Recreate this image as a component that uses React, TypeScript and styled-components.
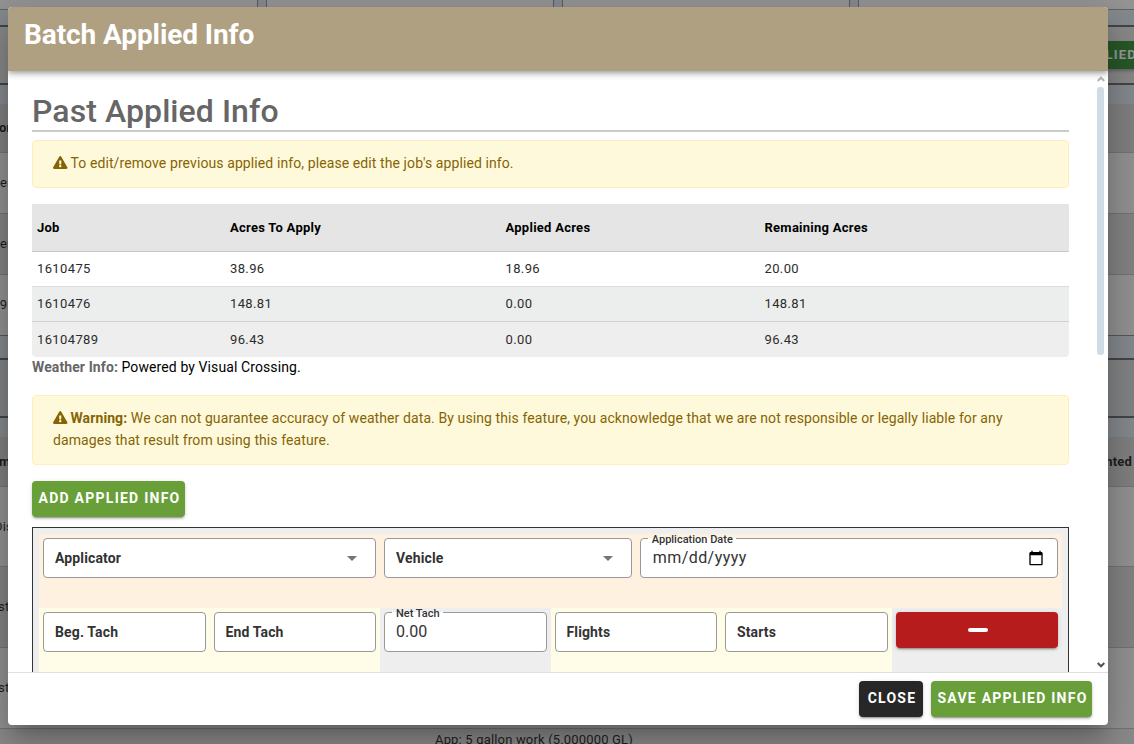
import React from "react";
import styled, { createGlobalStyle } from "styled-components";

const GlobalStyle = createGlobalStyle`
  *, *::before, *::after { box-sizing: border-box; }
  html, body { margin: 0; padding: 0; height: 100%; overflow: hidden; }
  body { font-family: Roboto, "Liberation Sans", sans-serif; font-size: 14px; color: #000; }
`;

const Screen = styled.div`
  position: relative;
  width: 1134px;
  height: 744px;
  overflow: hidden;
  background: #fff;
`;

/* ---- page behind the dialog ---- */

const Page = styled.div`
  display: flex;
  flex-direction: column;
  height: 744px;
`;

const TileRow = styled.div`
  display: grid;
  flex: none;
  grid-template-columns: 258px 288px 288px 1fr;
  column-gap: 8px;
  height: 10px;
  background: #dbe7f0;
  border-bottom: 1px solid #999;
`;

const Tile = styled.div<{ $first?: boolean; $last?: boolean }>`
  background: #f8f8f8;
  border-left: ${(p) => (p.$first ? "0" : "1px solid #8c8c8c")};
  border-right: ${(p) => (p.$last ? "0" : "1px solid #8c8c8c")};
`;

const Band = styled.div<{ $h: number; $bg: string; $line?: string; $lineWidth?: number; $bold?: boolean }>`
  display: flex;
  justify-content: space-between;
  align-items: center;
  flex: none;
  height: ${(p) => p.$h}px;
  background: ${(p) => p.$bg};
  border-bottom: ${(p) => (p.$line ? `${p.$lineWidth ?? 1}px solid ${p.$line}` : "0")};
  font-size: 13px;
  font-weight: ${(p) => (p.$bold ? 700 : 400)};
  letter-spacing: 0.2px;
  color: #1c1c1c;
  overflow: hidden;
  white-space: nowrap;
`;

const CutLeft = styled.span<{ $shift?: number }>`
  margin-left: ${(p) => p.$shift ?? 0}px;
  padding-bottom: 1px;
`;

const CutRight = styled.span`
  padding-right: 2px;
`;

const PageButton = styled.span`
  display: flex;
  align-items: center;
  justify-content: flex-end;
  width: 120px;
  height: 28px;
  margin-right: -3px;
  padding-bottom: 1px;
  background: #2f8a2f;
  color: #fff;
  font-weight: 700;
  letter-spacing: 1.2px;
  box-shadow: 0 2px 3px rgba(0, 0, 0, 0.3);
`;

const JobNote = styled.div`
  display: flex;
  flex: 1;
  padding: 3px 0 0 435px;
  background: #e8e8e8;
  font-size: 13px;
  letter-spacing: 0.17px;
  white-space: nowrap;
  color: #222;
`;

const Overlay = styled.div`
  position: absolute;
  inset: 0;
  background: rgba(33, 33, 33, 0.46);
`;

/* ---- dialog ---- */

const Dialog = styled.section`
  position: absolute;
  left: 8px;
  top: 7px;
  width: 1100px;
  height: 718px;
  display: flex;
  flex-direction: column;
  border-radius: 4px;
  overflow: hidden;
  background: #fff;
  box-shadow: 0 11px 15px -7px rgba(0, 0, 0, 0.2), 0 24px 38px 3px rgba(0, 0, 0, 0.14),
    0 9px 46px 8px rgba(0, 0, 0, 0.12);
`;

const DialogHeader = styled.header`
  position: relative;
  flex: none;
  height: 64px;
  padding: 11px 16px;
  background: #afa082;
  color: #fff;
  font-size: 28px;
  line-height: 33px;
  font-weight: 700;
  letter-spacing: -0.09px;
  box-shadow: 0 2px 4px -1px rgba(0, 0, 0, 0.2), 0 4px 5px 0 rgba(0, 0, 0, 0.14),
    0 1px 10px 0 rgba(0, 0, 0, 0.12);
  z-index: 1;
`;

const DialogBody = styled.div`
  display: flex;
  height: 601px;
  flex: none;
  overflow: hidden;
`;

const Content = styled.main`
  width: 1085px;
  padding: 20px 24px 0;
`;

const Heading = styled.h1`
  margin: 0 0 8px;
  height: 41px;
  border-bottom: 2px solid #cbcbcb;
  font-size: 32px;
  line-height: 40px;
  font-weight: 500;
  letter-spacing: 0.08px;
  color: #666;
`;

const Alert = styled.div`
  margin-bottom: 16px;
  padding: 11px 20px 13px;
  border: 1px solid #ffeeba;
  border-radius: 4px;
  background: #fff9db;
  color: #856404;
  line-height: 22px;
  letter-spacing: 0.096px;

  svg { vertical-align: -1px; margin-right: 3px; }
`;

const JobTable = styled.div`
  border-radius: 0 0 4px 4px;
  overflow: hidden;
`;

const JobRow = styled.div<{ $bg: string; $h: number; $line?: string; $head?: boolean }>`
  display: grid;
  grid-template-columns: 193px 275.5px 259px 1fr;
  align-items: center;
  height: ${(p) => p.$h}px;
  padding: 0 0 ${(p) => (p.$line && !p.$head ? 1 : 0)}px 5px;
  background: ${(p) => p.$bg};
  border-bottom: ${(p) => (p.$line ? `1px solid ${p.$line}` : "0")};
  font-size: 13px;
  letter-spacing: ${(p) => (p.$head ? "0.26px" : "0.37px")};
  font-weight: ${(p) => (p.$head ? 700 : 400)};
  color: ${(p) => (p.$head ? "#000" : "#2c2c2c")};
`;

const Weather = styled.p`
  margin: 0 0 17px;
  height: 21px;
  line-height: 20px;
  letter-spacing: 0.1px;

  b { color: #666; }
`;

const Button = styled.button<{ $bg: string; $w?: string }>`
  display: flex;
  align-items: center;
  justify-content: center;
  width: ${(p) => p.$w ?? "auto"};
  height: 36px;
  padding: 0 0 2px 2px;
  border: 0;
  border-radius: 4px;
  background: ${(p) => p.$bg};
  color: #fff;
  font: 700 14px Roboto, "Liberation Sans", sans-serif;
  letter-spacing: 1.25px;
  white-space: nowrap;
  box-shadow: 0 3px 1px -2px rgba(0, 0, 0, 0.2), 0 2px 2px 0 rgba(0, 0, 0, 0.14),
    0 1px 5px 0 rgba(0, 0, 0, 0.12);
`;

const EntryBox = styled.div`
  margin-top: 10px;
  height: 300px;
  padding: 6px;
  border: 1px solid #333;
  background: #eee;
`;

const EntryRow = styled.div<{ $bg?: string; $h: number }>`
  display: grid;
  grid-template-columns: repeat(12, 1fr);
  height: ${(p) => p.$h}px;
  background: ${(p) => p.$bg ?? "transparent"};
`;

const Cell = styled.div<{ $span: number; $bg?: string }>`
  grid-column: span ${(p) => p.$span};
  padding: 4px;
  background: ${(p) => p.$bg ?? "transparent"};
`;

const Field = styled.div`
  position: relative;
  display: flex;
  align-items: center;
  justify-content: space-between;
  height: 40px;
  padding: 0 13px 0 11px;
  border: 1px solid #999;
  border-radius: 4px;
  background: #fff;
`;

const FieldName = styled.span`
  font-weight: 700;
  letter-spacing: 0.13px;
  color: #333;
`;

const FloatName = styled.span`
  position: absolute;
  left: 7px;
  top: -6px;
  padding: 0 3px 0 4px;
  font-size: 11px;
  line-height: 14px;
  font-weight: 500;
  letter-spacing: 0;
  color: #333;
  background: linear-gradient(transparent 5px, #fff 5px);
`;

const FieldValue = styled.span<{ $date?: boolean }>`
  padding: 0 0 2px ${(p) => (p.$date ? 1 : 0)}px;
  font-size: 16px;
  letter-spacing: ${(p) => (p.$date ? "0.43px" : "0.05px")};
  color: #333;
`;

const Caret = styled.i`
  margin-right: 5px;
  border: 5px solid transparent;
  border-top-color: #757575;
  border-bottom: 0;
`;

const MinusBar = styled.i`
  width: 20px;
  height: 4px;
  margin-top: 2px;
  border-radius: 2px;
  background: #fff;
`;

const ScrollRail = styled.div`
  display: flex;
  flex-direction: column;
  align-items: center;
  width: 15px;
  padding: 5px 0 4px;

  svg:last-child { margin-top: auto; }
`;

const ScrollThumb = styled.div`
  width: 7px;
  height: 268px;
  margin-top: 5px;
  border-radius: 3px;
  background: #d0dce5;
`;

const DialogFooter = styled.footer`
  display: flex;
  flex: 1;
  justify-content: flex-end;
  gap: 8px;
  padding: 8px 16px;
  border-top: 1px solid #e0e0e0;
`;

const WarnIcon = () => (
  <svg width="14.5" height="13" viewBox="0 0 576 512" fill="#856404">
    <path d="M569.517 440.013C587.975 472.007 564.806 512 527.94 512H48.054c-36.937 0-59.999-40.055-41.577-71.987L246.423 23.985c18.467-32.009 64.72-31.951 83.154 0l239.94 416.028zM288 354c-25.405 0-46 20.595-46 46s20.595 46 46 46 46-20.595 46-46-20.595-46-46-46zm-43.673-165.346l7.418 136c.347 6.364 5.609 11.346 11.982 11.346h48.546c6.373 0 11.635-4.982 11.982-11.346l7.418-136c.375-6.874-5.098-12.654-11.982-12.654h-63.383c-6.884 0-12.356 5.78-11.981 12.654z" />
  </svg>
);

const CalendarIcon = () => (
  <svg width="16" height="16" viewBox="0 0 24 24" fill="#000">
    <path d="M20 3h-1V1h-2v2H7V1H5v2H4c-1.1 0-2 .9-2 2v16c0 1.1.9 2 2 2h16c1.1 0 2-.9 2-2V5c0-1.1-.9-2-2-2zm0 18H4V8h16v13z" />
  </svg>
);

const Arrow = ({ up }: { up?: boolean }) => (
  <svg width="8" height="6" viewBox="0 0 8 6" fill="none" stroke={up ? "#b5b5b5" : "#505050"} strokeWidth="2">
    <path d={up ? "M0.7 5L4 1.7L7.3 5" : "M0.7 1L4 4.3L7.3 1"} />
  </svg>
);

const jobs = [
  { cells: ["1610475", "38.96", "18.96", "20.00"], bg: "#fff", line: "#dcdede", h: 35 },
  { cells: ["1610476", "148.81", "0.00", "148.81"], bg: "#ebeeed", line: "#cfd2d1", h: 35 },
  { cells: ["16104789", "96.43", "0.00", "96.43"], bg: "#eee", h: 35 },
];

const blue = "#dce5ec";
const line = "#bdbdbd";

export default function App() {
  return (
    <Screen>
      <GlobalStyle />
      <Page>
        <TileRow>
          <Tile $first />
          <Tile />
          <Tile />
          <Tile $last />
        </TileRow>
        <Band $h={17} $bg={blue} $line="#666" $lineWidth={2} />
        <Band $h={58} $bg="#e4e4e4" $line="#666" $lineWidth={2} $bold>
          <span />
          <PageButton>LIED</PageButton>
        </Band>
        <Band $h={19} $bg={blue} />
        <Band $h={49} $bg="#d5d5d5" $line={line} $bold><CutLeft $shift={-1}>on</CutLeft></Band>
        <Band $h={61} $bg="#f6f6f6" $line={line}><CutLeft>es</CutLeft></Band>
        <Band $h={61} $bg="#dadada" $line={line}><CutLeft>es</CutLeft></Band>
        <Band $h={61} $bg="#f6f6f6" $line="#8a8a8a"><CutLeft $shift={-4}>.9</CutLeft></Band>
        <Band $h={24} $bg={blue} $line="#666" $lineWidth={2} />
        <Band $h={58} $bg="#d8dbdd" $line="#666" $lineWidth={2} />
        <Band $h={19} $bg={blue} />
        <Band $h={50} $bg="#d5d5d5" $line={line} $bold>
          <CutLeft $shift={-1}>m</CutLeft>
          <CutRight>nted</CutRight>
        </Band>
        <Band $h={80} $bg="#f6f6f6" $line={line}><CutLeft $shift={-6}>Dis</CutLeft></Band>
        <Band $h={81} $bg="#dadada" $line={line}><CutLeft $shift={-2}>st</CutLeft></Band>
        <Band $h={81} $bg="#f6f6f6" $line={line}><CutLeft $shift={-2}>st</CutLeft></Band>
        <JobNote>App: 5 gallon work (5.000000 GL)</JobNote>
      </Page>
      <Overlay />
      <Dialog>
        <DialogHeader>Batch Applied Info</DialogHeader>
        <DialogBody>
          <Content>
            <Heading>Past Applied Info</Heading>
            <Alert>
              <WarnIcon />
              To edit/remove previous applied info, please edit the job's applied info.
            </Alert>
            <JobTable>
              <JobRow $bg="#e5e5e5" $h={48} $line="#c8c8c8" $head>
                <span>Job</span>
                <span>Acres To Apply</span>
                <span>Applied Acres</span>
                <span>Remaining Acres</span>
              </JobRow>
              {jobs.map((job) => (
                <JobRow key={job.cells[0]} $bg={job.bg} $h={job.h} $line={job.line}>
                  {job.cells.map((cell, i) => (
                    <span key={i}>{cell}</span>
                  ))}
                </JobRow>
              ))}
            </JobTable>
            <Weather>
              <b>Weather Info:</b> Powered by Visual Crossing.
            </Weather>
            <Alert>
              <WarnIcon />
              <b>Warning:</b> We can not guarantee accuracy of weather data. By using this feature, you
              acknowledge that we are not responsible or legally liable for any damages that result from using
              this feature.
            </Alert>
            <Button $bg="#689f38" $w="153px">ADD APPLIED INFO</Button>
            <EntryBox>
              <EntryRow $bg="#fff1df" $h={74}>
                <Cell $span={4}>
                  <Field><FieldName>Applicator</FieldName><Caret /></Field>
                </Cell>
                <Cell $span={3}>
                  <Field><FieldName>Vehicle</FieldName><Caret /></Field>
                </Cell>
                <Cell $span={5}>
                  <Field>
                    <FloatName>Application Date</FloatName>
                    <FieldValue $date>mm/dd/yyyy</FieldValue>
                    <CalendarIcon />
                  </Field>
                </Cell>
              </EntryRow>
              <EntryRow $h={80}>
                <Cell $span={2} $bg="#fffde7">
                  <Field><FieldName>Beg. Tach</FieldName></Field>
                </Cell>
                <Cell $span={2} $bg="#fffde7">
                  <Field><FieldName>End Tach</FieldName></Field>
                </Cell>
                <Cell $span={2}>
                  <Field>
                    <FloatName>Net Tach</FloatName>
                    <FieldValue>0.00</FieldValue>
                  </Field>
                </Cell>
                <Cell $span={2} $bg="#fffde7">
                  <Field><FieldName>Flights</FieldName></Field>
                </Cell>
                <Cell $span={2} $bg="#fffde7">
                  <Field><FieldName>Starts</FieldName></Field>
                </Cell>
                <Cell $span={2}>
                  <Button $bg="#b71c1c" $w="100%"><MinusBar /></Button>
                </Cell>
              </EntryRow>
            </EntryBox>
          </Content>
          <ScrollRail>
            <Arrow up />
            <ScrollThumb />
            <Arrow />
          </ScrollRail>
        </DialogBody>
        <DialogFooter>
          <Button $bg="#272727" $w="64px">CLOSE</Button>
          <Button $bg="#689f38" $w="161px">SAVE APPLIED INFO</Button>
        </DialogFooter>
      </Dialog>
    </Screen>
  );
}
